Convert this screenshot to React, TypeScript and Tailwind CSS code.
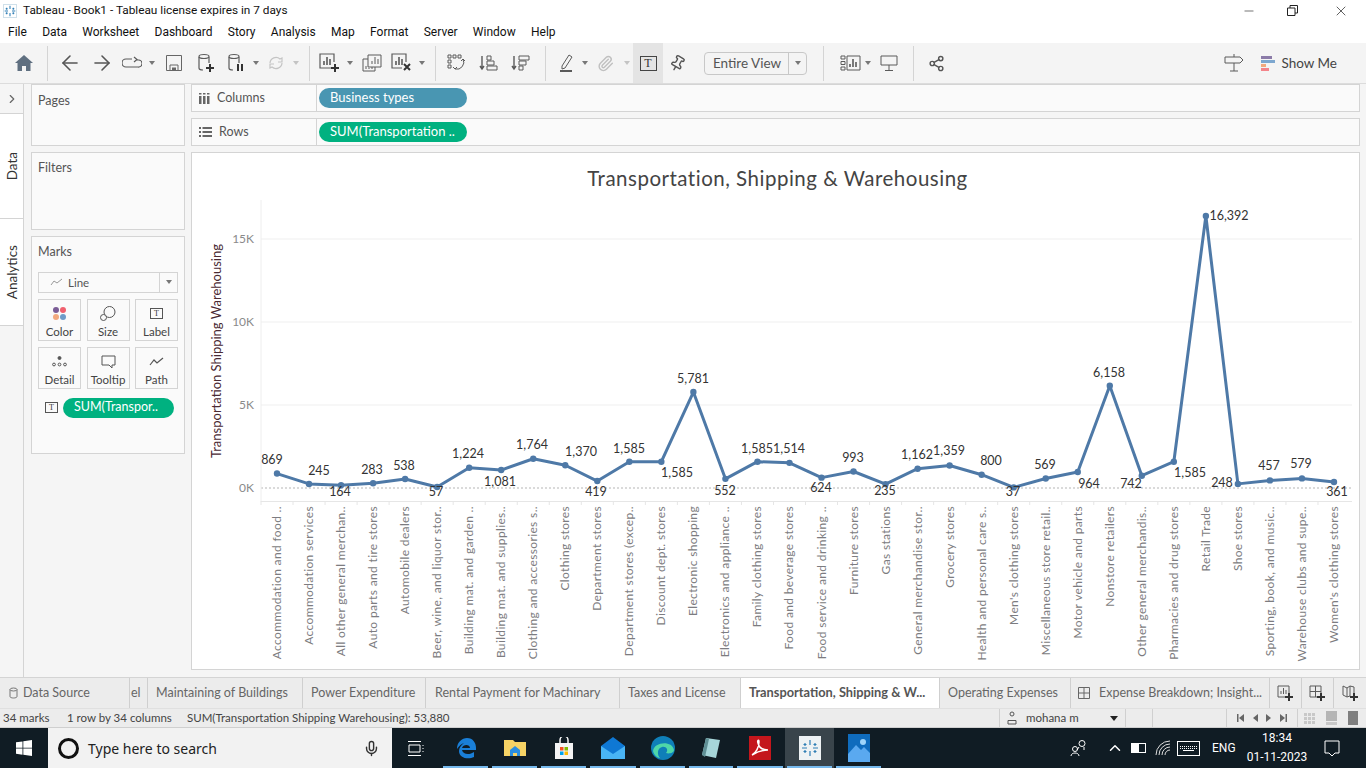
import type { ReactNode } from 'react';
import { ArrowLeft, ArrowRight, Minus, X, ChevronRight, Mic, ChevronUp, Paperclip, Pin, Share2 } from 'lucide-react';

const values = [869, 245, 164, 283, 538, 57, 1224, 1081, 1764, 1370, 419, 1585, 1585, 5781, 552, 1585, 1514, 624, 993, 235, 1162, 1359, 800, 37, 569, 964, 6158, 742, 1585, 16392, 248, 457, 579, 361];

const names = [
  'Accommodation and food ..', 'Accommodation services', 'All other general merchan..', 'Auto parts and tire stores',
  'Automobile dealers', 'Beer, wine, and liquor stor..', 'Building mat. and garden ..', 'Building mat. and supplies..',
  'Clothing and accessories s..', 'Clothing stores', 'Department stores', 'Department stores (excep..',
  'Discount dept. stores', 'Electronic shopping', 'Electronics and appliance ..', 'Family clothing stores',
  'Food and beverage stores', 'Food service and drinking ..', 'Furniture stores', 'Gas stations',
  'General merchandise stor..', 'Grocery stores', 'Health and personal care s..', "Men's clothing stores",
  'Miscellaneous store retail..', 'Motor vehicle and parts', 'Nonstore retailers', 'Other general merchandis..',
  'Pharmacies and drug stores', 'Retail Trade', 'Shoe stores', 'Sporting, book, and music..',
  'Warehouse clubs and supe..', "Women's clothing stores",
];

// label centre positions, read off the screenshot
const labelPos: [number, number][] = [
  [272, 464], [319, 475], [340, 496], [372, 474], [404, 470], [436, 496], [468, 458], [500, 486], [532, 449], [581, 456],
  [596, 496], [629, 453], [677, 477], [693, 383], [725, 495], [757, 453], [789, 453], [821, 492], [853, 462], [885, 495],
  [917, 459], [949, 455], [991, 465], [1013, 496], [1045, 469], [1089, 488], [1109, 377], [1131, 488], [1190, 477], [1229, 220],
  [1222, 487], [1269, 470], [1301, 468], [1337, 496],
];

const px = (i: number) => 277 + i * 32.03;
const py = (v: number) => 488 - (v / 5000) * 83;

function Chart() {
  const points = values.map((v, i) => `${px(i)},${py(v)}`).join(' ');
  return (
    <svg viewBox="192 153 1167 516" className="w-full h-full block" style={{ fontFamily: 'Lato, sans-serif' }}>
      <text x="777.500" y="186" textAnchor="middle" fontSize="20.5" fill="#444" letterSpacing="0.5">Transportation, Shipping &amp; Warehousing</text>
      <text transform="translate(221,458) rotate(-90)" fontSize="13" fill="#4a2a33">Transportation Shipping Warehousing</text>
      {[15, 10, 5].map((k) => (
        <g key={k}>
          <line x1="261" x2="1352" y1={488 - k * 16.6} y2={488 - k * 16.6} stroke="#efefef" />
          <text x="254" y={488 - k * 16.6 + 4} textAnchor="end" fontSize="12" fill="#8a8a8a">{k}K</text>
        </g>
      ))}
      <text x="254" y="492" textAnchor="end" fontSize="12" fill="#8a8a8a">0K</text>
      <line x1="261" x2="1352" y1="488" y2="488" stroke="#b5b5b5" strokeDasharray="2 2" />
      <line x1="261" x2="261" y1="200" y2="502" stroke="#eeeeee" />
      <line x1="261" x2="1352" y1="501.500" y2="501.500" stroke="#e6e6e6" />
      {values.map((_, i) => (
        <line key={i} x1={261 + i * 32.03} x2={261 + i * 32.03} y1="501" y2="505" stroke="#e6e6e6" />
      ))}
      <polyline points={points} fill="none" stroke="#4e79a7" strokeWidth="3" strokeLinejoin="round" />
      {values.map((v, i) => (
        <circle key={i} cx={px(i)} cy={py(v)} r="3.2" fill="#4e79a7" />
      ))}
      {values.map((v, i) => (
        <text key={i} x={labelPos[i][0]} y={labelPos[i][1]} textAnchor="middle" fontSize="12.5" fill="#333">
          {v.toLocaleString('en-US')}
        </text>
      ))}
      {names.map((n, i) => (
        <text key={n} transform={`translate(${px(i) + 4},506) rotate(-90)`} textAnchor="end" fontSize="12" letterSpacing="0.35" fill="#7c7c80">
          {n}
        </text>
      ))}
    </svg>
  );
}

function Ico({ children, w = 22, h = 22 }: { children: ReactNode; w?: number; h?: number }) {
  return (
    <svg width={w} height={h} viewBox={`0 0 ${w} ${h}`} fill="none" stroke="#5a5a5a" strokeWidth="1.2">
      {children}
    </svg>
  );
}

function Caret() {
  return <div className="w-0 h-0 border-x-[3px] border-x-transparent border-t-[4px] border-t-[#777]" />;
}

function Sep({ className }: { className: string }) {
  return (
    <div className={`${className} flex justify-center`}>
      <div className="w-px h-[35px] bg-[#d4d4d4]" />
    </div>
  );
}

function Slot({ className, children }: { className: string; children?: ReactNode }) {
  return <div className={`${className} h-full flex items-center justify-center shrink-0`}>{children}</div>;
}

function Plus({ x, y }: { x: number; y: number }) {
  return <path d={`M${x - 4} ${y}h8M${x} ${y - 4}v8`} stroke="#333" strokeWidth="2" />;
}

function Toolbar() {
  return (
    <div className="h-[41px] bg-[#f4f4f4] border-b border-[#dcdcdc] flex items-center pl-2 shrink-0">
      <Slot className="w-8">
        <svg width="18" height="16" viewBox="0 0 18 16" fill="#5f6f80"><path d="M9 0l9 8h-2.500v8h-4.500v-5H7v5H2.500V8H0z" /></svg>
      </Slot>
      <Sep className="w-[14px]" />
      <Slot className="w-8"><ArrowLeft size={24} stroke="#555" strokeWidth={1.6} /></Slot>
      <Slot className="w-8"><ArrowRight size={24} stroke="#555" strokeWidth={1.6} /></Slot>
      <Slot className="w-7">
        <Ico w={20} h={14}><path d="M10 3H4a3.500 3.500 0 0 0 0 8h12a3.500 3.500 0 0 0 1-7h-3M12 1l3 2.500-3 2.500" /></Ico>
      </Slot>
      <Slot className="w-3"><Caret /></Slot>
      <Slot className="w-8">
        <Ico w={16} h={16}><path d="M.500.500h15v15H.500zM4 15v-5h8v5" stroke="#666" strokeWidth="1" /><path d="M6 12.500h4V15H6z" fill="#666" stroke="none" /></Ico>
      </Slot>
      <Slot className="w-8">
        <Ico w={20} h={20}><ellipse cx="8" cy="3.500" rx="5" ry="2" /><path d="M3 4v11c0 1 1 2 4 2M13 4v6" /><Plus x={14} y={15} /></Ico>
      </Slot>
      <Slot className="w-7">
        <Ico w={20} h={20}><ellipse cx="8" cy="3.500" rx="5" ry="2" /><path d="M3 4v11c0 1 1 2 4 2M13 4v6" /><path d="M12 11v7M16 11v7" stroke="#333" strokeWidth="2" /></Ico>
      </Slot>
      <Slot className="w-3"><Caret /></Slot>
      <Slot className="w-7">
        <Ico w={18} h={18}><path d="M3 9a6 6 0 0 1 10-4l2-1v4h-4M15 9a6 6 0 0 1-10 4l-2 1v-4h4" stroke="#c4c4c4" /></Ico>
      </Slot>
      <Slot className="w-3"><div className="w-0 h-0 border-x-[3px] border-x-transparent border-t-[4px] border-t-[#c4c4c4]" /></Slot>
      <Sep className="w-[14px]" />
      <Slot className="w-7">
        <Ico w={22} h={20}><path d="M15 15H1V1h14v8" /><path d="M5 12V8M8 12V4M11 12V6" strokeWidth="1.600" /><Plus x={16} y={15} /></Ico>
      </Slot>
      <Slot className="w-3"><Caret /></Slot>
      <Slot className="w-8">
        <Ico w={20} h={18}><path d="M6 1h13v12H6zM6 5H1v12h12v-4" strokeWidth="1" /><path d="M10 10V7M13 10V3M16 10V5M4 15v-3M7 15v-1M10 15v-2" strokeWidth="1" /></Ico>
      </Slot>
      <Slot className="w-7">
        <Ico w={22} h={20}><path d="M11 15H1V1h14v8" /><path d="M5 12V8M8 12V4M11 12V6" strokeWidth="1.600" /><path d="M13 11l6 6M19 11l-6 6" stroke="#333" strokeWidth="2" /></Ico>
      </Slot>
      <Slot className="w-3"><Caret /></Slot>
      <Sep className="w-[14px]" />
      <Slot className="w-[30px]">
        <Ico w={20} h={18}><path d="M1 1h3v3H1zM6 1h3v3H6zM11 1h3v3h-3zM1 6h3v3H1zM1 11h3v3H1z" strokeWidth="1" /><path d="M16 5a7 7 0 0 1-8 10M6 13l2 2 2-2M14 7l2-2 2 2" strokeWidth="1" /></Ico>
      </Slot>
      <Slot className="w-[34px]">
        <Ico w={20} h={18}><path d="M3 2v13M1 12l2 3 2-3" strokeWidth="1.400" /><path d="M8 2h4v4H8zM8 7h7v4H8zM8 12h10v4H8z" strokeWidth="1" /></Ico>
      </Slot>
      <Slot className="w-[30px]">
        <Ico w={20} h={18}><path d="M3 2v13M1 12l2 3 2-3" strokeWidth="1.400" /><path d="M8 2h10v4H8zM8 7h7v4H8zM8 12h4v4H8z" strokeWidth="1" /></Ico>
      </Slot>
      <Sep className="w-[18px]" />
      <Slot className="w-[26px]">
        <Ico w={16} h={20}><path d="M3 13L10 2l3 2-7 11-3 1z" strokeWidth="1" /><path d="M1 18h12" strokeWidth="2" /></Ico>
      </Slot>
      <Slot className="w-[10px]"><Caret /></Slot>
      <Slot className="w-[30px]"><Paperclip size={17} stroke="#c0c0c0" /></Slot>
      <Slot className="w-[13px]"><div className="w-0 h-0 border-x-[3px] border-x-transparent border-t-[4px] border-t-[#c4c4c4]" /></Slot>
      <Slot className="w-[30px] bg-[#e4e4e4]">
        <div className="w-[17px] h-[15px] border border-[#444] flex items-center justify-center text-[12px] text-[#333] font-['Liberation_Serif',serif] leading-none">T</div>
      </Slot>
      <Slot className="w-[29px]"><Pin size={17} stroke="#555" className="rotate-[30deg]" /></Slot>
      <div className="ml-3 w-[103px] h-[23px] border border-[#c8c8c8] rounded-sm flex items-center shrink-0">
        <span className="flex-1 pl-2 text-[13.500px] text-[#555] font-['Lato',sans-serif]">Entire View</span>
        <div className="w-[18px] h-full border-l border-[#c8c8c8] flex items-center justify-center"><Caret /></div>
      </div>
      <Sep className="w-[32px]" />
      <Slot className="w-6">
        <Ico w={22} h={16}><path d="M1 1h4v3H1zM1 6.500h4v3H1zM1 12h4v3H1zM7 1h13v14H7z" strokeWidth="1" /><path d="M10 12V9M13 12V4M16 12V7" strokeWidth="1.600" /></Ico>
      </Slot>
      <Slot className="w-[10px]"><Caret /></Slot>
      <Slot className="w-8">
        <Ico w={18} h={18}><path d="M1 2h16v9H1zM9 11v5M5 16.500h8" strokeWidth="1" /></Ico>
      </Slot>
      <Sep className="w-4" />
      <Slot className="w-[30px]"><Share2 size={17} stroke="#555" /></Slot>
      <div className="flex-1" />
      <Slot className="w-[30px]">
        <Ico w={20} h={20}><path d="M1 4h15l3 3-3 3H1zM10 1v3M10 10v8M6 18h8" strokeWidth="1" /></Ico>
      </Slot>
      <div className="ml-3 flex flex-col gap-px w-[14px] shrink-0">
        <div className="h-[3px] w-[11px] bg-[#8b7ba8]" />
        <div className="h-[3px] w-[14px] bg-[#7da7cf]" />
        <div className="h-[3px] w-[5px] bg-[#f2a97e]" />
        <div className="h-[3px] w-[8px] bg-[#f4848a]" />
      </div>
      <span className="ml-[6px] mr-[29px] text-[13.500px] text-[#444] font-['Lato',sans-serif]">Show Me</span>
    </div>
  );
}

function MarkCard({ label, icon }: { label: string; icon: ReactNode }) {
  return (
    <div className="h-[42px] border border-[#d4d4d4] flex flex-col items-center pt-[3px] text-[11.500px] text-[#444]">
      <div className="h-[22px] flex items-center">{icon}</div>
      <span className="leading-[14px]">{label}</span>
    </div>
  );
}

function TBox() {
  return <div className="w-[13px] h-[11px] border border-[#555] flex items-center justify-center text-[8px] leading-none text-[#333] font-['Liberation_Serif',serif]">T</div>;
}

function Sidebar() {
  return (
    <div className="w-[154px] ml-[7px] mr-[6px] shrink-0 flex flex-col gap-[6px] text-[#555] text-[12.500px] font-['Lato',sans-serif]">
      <div className="h-[62px] border border-[#d4d4d4] pl-[6px] pt-[7px] bg-[#fafafa]">Pages</div>
      <div className="h-[78px] border border-[#d4d4d4] pl-[6px] pt-[6px] bg-[#fafafa]">Filters</div>
      <div className="h-[218px] border border-[#d4d4d4] px-[6px] pt-[6px] bg-[#fafafa]">
        <div>Marks</div>
        <div className="mt-[10px] h-[21px] border border-[#d4d4d4] flex items-center">
          <div className="flex-1 flex items-center pl-[11px] gap-[5px] text-[11.500px]">
            <svg width="13" height="8" viewBox="0 0 13 8" fill="none" stroke="#999"><path d="M1 7l3-4 3 2 5-4" /></svg>
            Line
          </div>
          <div className="w-[18px] h-full border-l border-[#d4d4d4] flex items-center justify-center"><Caret /></div>
        </div>
        <div className="mt-[6px] grid grid-cols-[43px_43px_43px] justify-between gap-y-[6px]">
          <MarkCard label="Color" icon={<div className="grid grid-cols-2 gap-[1px]"><i className="block w-[6px] h-[6px] rounded-full bg-[#7a5c96]" /><i className="block w-[6px] h-[6px] rounded-full bg-[#f0606e]" /><i className="block w-[6px] h-[6px] rounded-full bg-[#f2a97e]" /><i className="block w-[6px] h-[6px] rounded-full bg-[#6f9bc8]" /></div>} />
          <MarkCard label="Size" icon={<svg width="16" height="15" viewBox="0 0 16 15" fill="none" stroke="#555"><circle cx="9.500" cy="6" r="5.500" /><circle cx="3.500" cy="11.500" r="3" fill="#fafafa" /></svg>} />
          <MarkCard label="Label" icon={<TBox />} />
          <MarkCard label="Detail" icon={<svg width="15" height="11" viewBox="0 0 15 11" fill="none" stroke="#555"><circle cx="7.500" cy="2" r="1.500" fill="#555" /><circle cx="2" cy="8.500" r="1.400" /><circle cx="7.500" cy="8.500" r="1.400" /><circle cx="13" cy="8.500" r="1.400" /></svg>} />
          <MarkCard label="Tooltip" icon={<svg width="15" height="14" viewBox="0 0 15 14" fill="none" stroke="#555"><path d="M1 1h13v9h-3v3l-3-3H1z" /></svg>} />
          <MarkCard label="Path" icon={<svg width="15" height="9" viewBox="0 0 15 9" fill="none" stroke="#555" strokeWidth="1.200"><path d="M1 8l4-5 3 3 6-5" /></svg>} />
        </div>
        <div className="mt-[9px] flex items-center gap-[5px] pl-[7px]">
          <TBox />
          <div className="w-[111px] h-[20px] rounded-full bg-[#00b180] text-white text-[12.500px] flex items-center pl-[11px]">SUM(Transpor..</div>
        </div>
      </div>
    </div>
  );
}

function Shelf({ icon, label, pill, color }: { icon: ReactNode; label: string; pill: string; color: string }) {
  return (
    <div className="h-[28px] border border-[#d4d4d4] bg-[#fafafa] flex items-center shrink-0">
      <div className="w-[125px] h-full flex items-center border-r border-[#d4d4d4] pl-[7px] gap-[7px] text-[12.500px] text-[#555]">
        {icon}
        {label}
      </div>
      <div className={`${color} ml-[2px] w-[148px] h-[20px] rounded-full text-white text-[13px] flex items-center pl-[11px]`}>{pill}</div>
    </div>
  );
}

function Tab({ className, children }: { className: string; children: ReactNode }) {
  return <div className={`${className} h-full shrink-0 flex items-center border-r border-[#cfcfcf] text-[#666] text-[12.500px] whitespace-nowrap overflow-hidden`}>{children}</div>;
}

function Tabs() {
  return (
    <div className="h-[31px] bg-[#ececec] border-t border-[#d4d4d4] flex font-['Lato',sans-serif] shrink-0">
      <Tab className="w-[130px] pl-[9px] gap-[5px]">
        <svg width="9" height="12" viewBox="0 0 9 12" fill="none" stroke="#777"><ellipse cx="4.500" cy="2.500" rx="3.500" ry="1.500" /><path d="M1 2.500v7c0 2 7 2 7 0v-7" /></svg>
        Data Source
      </Tab>
      <Tab className="w-[18px] pl-px">el</Tab>
      <Tab className="w-[155px] pl-2">Maintaining of Buildings</Tab>
      <Tab className="w-[123px] pl-2">Power Expenditure</Tab>
      <Tab className="w-[194px] pl-[9px]">Rental Payment for Machinary</Tab>
      <Tab className="w-[121px] pl-2">Taxes and License</Tab>
      <Tab className="w-[199px] pl-2 bg-white font-bold !text-[#555] !text-[12.800px]">Transportation, Shipping &amp; W...</Tab>
      <Tab className="w-[131px] pl-2">Operating Expenses</Tab>
      <Tab className="w-[199px] justify-center gap-[9px]">
        <svg width="12" height="12" viewBox="0 0 12 12" fill="none" stroke="#666"><path d="M.5.5h11v11H.5zM6 .5v11M.5 6h11" /></svg>
        Expense Breakdown; Insight...
      </Tab>
      <Tab className="w-[32px] justify-center"><Ico w={17} h={17}><path d="M10 12H1V1h11v7M4 9V6M6.500 9V3M9 9V5" strokeWidth="1" /><Plus x={12} y={12} /></Ico></Tab>
      <Tab className="w-[32px] justify-center"><Ico w={17} h={17}><path d="M9 12H1V1h11v7M6.500 1v11M1 6.500h11" strokeWidth="1" /><Plus x={12} y={12} /></Ico></Tab>
      <div className="flex-1 flex items-center justify-center"><Ico w={17} h={17}><path d="M8 11l-3 1-4-2V1l4 2 3-2 4 1v6M5 3v9M8 1v10" strokeWidth="1" /><Plus x={12} y={12} /></Ico></div>
    </div>
  );
}

function StatusBar() {
  return (
    <div className="h-[20px] bg-[#ececec] border-t border-[#e0e0e0] border-b border-b-[#cfcfcf] flex items-center text-[11.500px] text-[#444] font-['Lato',sans-serif] shrink-0">
      <span className="w-[64px] pl-[3px]">34 marks</span>
      <span className="w-[120px] pl-[3px]">1 row by 34 columns</span>
      <span className="pl-[3px]">SUM(Transportation Shipping Warehousing): 53,880</span>
      <div className="flex-1" />
      <div className="w-[127px] h-full border-x border-[#d0d0d0] flex items-center pl-[7px] gap-[9px]">
        <svg width="10" height="14" viewBox="0 0 10 14" fill="none" stroke="#555"><circle cx="5" cy="3" r="2" /><path d="M1 13V9.500h8V13z" /></svg>
        <span className="flex-1">mohana m</span>
        <div className="mr-[7px] w-0 h-0 border-x-[4px] border-x-transparent border-t-[5px] border-t-[#222]" />
      </div>
      <div className="w-[27px] h-full border-r border-[#d0d0d0]" />
      <div className="w-[74px] h-full border-r border-[#d0d0d0]" />
      <div className="w-[71px] h-full border-r border-[#d0d0d0] flex items-center justify-around px-[6px]">
        <svg width="7" height="8" viewBox="0 0 7 8" fill="#666"><path d="M0 0h1.500v8H0zM7 0v8L2 4z" /></svg>
        <svg width="5" height="8" viewBox="0 0 5 8" fill="#666"><path d="M5 0v8L0 4z" /></svg>
        <svg width="5" height="8" viewBox="0 0 5 8" fill="#666"><path d="M0 0v8l5-4z" /></svg>
        <svg width="7" height="8" viewBox="0 0 7 8" fill="#666"><path d="M0 0v8l5-4zM5.500 0H7v8H5.500z" /></svg>
      </div>
      <div className="flex-1 max-w-[68px] flex items-center justify-around pr-[2px]">
        <div className="grid grid-cols-3 gap-px">{Array.from({ length: 9 }, (_, i) => <i key={i} className="block w-[3px] h-[3px] bg-[#c8c8c8]" />)}</div>
        <div className="w-[11px] h-[14px] flex flex-col gap-px"><i className="block h-[10px] bg-[#b5b5b5]" /><i className="block h-[3px] bg-[#c8c8c8]" /></div>
        <div className="w-[10px] h-[14px] bg-[#7f7f7f]" />
      </div>
    </div>
  );
}

function TaskIcon({ className, active, children }: { className: string; active?: boolean; children: ReactNode }) {
  return (
    <div className={`${className} h-full shrink-0 relative flex items-center justify-center ${active ? 'bg-[#39444b]' : ''}`}>
      {children}
      <div className="absolute bottom-0 left-[2px] right-[2px] h-[2px] bg-[#76b9ed]" />
    </div>
  );
}

function Taskbar() {
  return (
    <div className="h-[40px] bg-[#101c24] flex items-center text-white font-['Roboto',sans-serif] shrink-0">
      <div className="w-[48px] h-full flex items-center justify-center">
        <svg width="16" height="16" viewBox="0 0 16 16" fill="#fff"><path d="M0 2.300l6.500-.9v6.300H0zM7.300 1.300L16 0v7.700H7.300zM0 8.400h6.500v6.300L0 13.800zM7.300 8.400H16V16l-8.700-1.200z" /></svg>
      </div>
      <div className="w-[344px] h-full bg-[#f2f2f2] flex items-center pl-[10px] text-[#222] text-[15px] font-['Noto_Sans',sans-serif]">
        <div className="w-[21px] h-[21px] rounded-full border-[3px] border-[#111] mr-[9px]" />
        <span className="flex-1 text-[14px]">Type here to search</span>
        <Mic size={17} stroke="#333" className="mr-[12px]" />
      </div>
      <div className="w-[48px] flex justify-center">
        <svg width="16" height="17" viewBox="0 0 16 17" fill="none" stroke="#fff"><path d="M0 1.500h13M0 15.500h13M1 5h11v7H1zM15 5v1M15 8v1M15 11v1" /></svg>
      </div>
      <div className="w-px" />
      <TaskIcon className="w-[49px]"><svg width="22" height="22" viewBox="0 0 22 22"><path d="M2 12C2 5 7 1 12 1c6 0 9 5 9 10v2H7c1 5 8 5 12 2v5c-6 3-15 1-15-6 0-3 2-6 5-8-3 1-5 3-7 6zm5-1h8c0-4-7-4-8 0z" fill="#1a7fd8" /></svg></TaskIcon>
      <TaskIcon className="w-[49px]"><svg width="22" height="20" viewBox="0 0 22 20"><path d="M0 2h9l2 2h11v14H0z" fill="#f6d365" /><path d="M6 12l5-4 5 4v6H6z" fill="#2a8ee0" /><path d="M9 15h4v3H9z" fill="#f6d365" /></svg></TaskIcon>
      <TaskIcon className="w-[49px]"><svg width="20" height="22" viewBox="0 0 20 22"><path d="M1 6h18v16H1z" fill="#f4f4f4" /><path d="M6 6V3a4 4 0 0 1 8 0v3" fill="none" stroke="#f4f4f4" strokeWidth="1.500" /><path d="M6 10h3.500v3.500H6z" fill="#f25022" /><path d="M10.500 10H14v3.500h-3.500z" fill="#7fba00" /><path d="M6 14.500h3.500V18H6z" fill="#00a4ef" /><path d="M10.500 14.500H14V18h-3.500z" fill="#ffb900" /></svg></TaskIcon>
      <TaskIcon className="w-[50px]"><svg width="24" height="22" viewBox="0 0 24 22"><path d="M12 0L0 9v13h24V9z" fill="#0f78d4" /><path d="M0 9l12 8 12-8v13H0z" fill="#49b4f5" /></svg></TaskIcon>
      <TaskIcon className="w-[49px]"><svg width="24" height="24" viewBox="0 0 24 24"><circle cx="12" cy="12" r="12" fill="#0f7fb8" /><path d="M2 15C3 6 21 4 23 14c0 3-5 4-8 3 3-3 0-7-4-6-5 1-5 8-2 11-3 0-6-3-7-7z" fill="#4fd7a8" /></svg></TaskIcon>
      <TaskIcon className="w-[48px]"><svg width="22" height="24" viewBox="0 0 22 24"><path d="M6 2l14 2-4 18-14-3z" fill="#a6d5d9" /><path d="M6 2l-4 17 3 2 4-18z" fill="#5f8f95" /></svg></TaskIcon>
      <TaskIcon className="w-[50px]"><svg width="22" height="24" viewBox="0 0 22 24"><path d="M0 0h22v24H0z" fill="#c4161c" /><path d="M3 19c4-2 7-8 7-13 0-3-2-2-1 1 1 5 4 7 10 7-5 0-11 2-16 5z" fill="none" stroke="#fff" strokeWidth="1.500" /></svg></TaskIcon>
      <TaskIcon className="w-[49px]" active>
        <div className="w-[22px] h-[24px] bg-[#eef2f4] flex items-center justify-center">
          <svg width="18" height="18" viewBox="0 0 18 18" stroke="#2f7eb5" strokeWidth="1.200"><path d="M9 1v5M9 12v5M1 9h5M12 9h5M4 4v3M2.500 5.500h3M14 4v3M12.500 5.500h3M4 11v3M2.500 12.500h3M14 11v3M12.500 12.500h3" /></svg>
        </div>
      </TaskIcon>
      <TaskIcon className="w-[49px]"><svg width="22" height="28" viewBox="0 0 22 28"><path d="M0 0h22v28H0z" fill="#0f6cbd" /><path d="M0 20l8-9 5 5 3-3 6 6v9H0z" fill="#5aa9f0" /><circle cx="15" cy="8" r="3" fill="#9fd5fa" /></svg></TaskIcon>
      <div className="flex-1" />
      <div className="w-[22px] flex justify-center mr-[16px]">
        <svg width="18" height="18" viewBox="0 0 18 18" fill="none" stroke="#fff"><circle cx="12" cy="4.500" r="3" /><path d="M9 8l-2 3M14 8v3" /><circle cx="5" cy="10" r="2.500" /><path d="M1 17c0-4 8-4 8 0" /></svg>
      </div>
      <ChevronUp size={18} stroke="#fff" className="mr-[7px]" />
      <div className="w-[15px] h-[10px] border border-white mr-[9px] flex"><i className="block w-[7px] bg-white" /></div>
      <svg width="16" height="16" viewBox="0 0 16 16" fill="none" stroke="#ddd" className="mr-[6px]"><path d="M1 15A14 14 0 0 1 15 1M4 15A11 11 0 0 1 15 4M7 15a8 8 0 0 1 8-8M10 15a5 5 0 0 1 5-5" /></svg>
      <div className="w-[23px] h-[15px] border border-white mr-[12px] flex flex-col justify-center gap-px px-[2px]">
        <i className="block h-px border-t border-dotted border-white" />
        <i className="block h-px border-t border-dotted border-white" />
        <i className="block h-px bg-white mx-[3px]" />
      </div>
      <span className="w-[29px] text-[12px] mr-[5px]">ENG</span>
      <div className="w-[62px] text-center text-[12px] leading-[19px] whitespace-nowrap">
        <div>18:34</div>
        <div>01-11-2023</div>
      </div>
      <div className="w-[48px] flex justify-center">
        <svg width="16" height="17" viewBox="0 0 16 17" fill="none" stroke="#fff"><path d="M1 1h14v12h-4l-3 3-3-3H1z" /></svg>
      </div>
      <div className="w-[10px]" />
    </div>
  );
}

export default function App() {
  return (
    <div className="w-[1366px] h-[768px] flex flex-col overflow-hidden bg-white font-['Roboto',sans-serif]">
      {/* Title bar */}
      <div className="h-[21px] flex items-center pl-[3px] shrink-0 text-[11.800px] text-[#111]">
        <div className="w-[14px] h-[14px] border border-[#cfe0ea] flex items-center justify-center">
          <svg width="12" height="12" viewBox="0 0 18 18" stroke="#2f7eb5" strokeWidth="1.600"><path d="M9 1v5M9 12v5M1 9h5M12 9h5M4 4v3M2.500 5.500h3M14 4v3M12.500 5.500h3M4 11v3M2.500 12.500h3M14 11v3M12.500 12.500h3" /></svg>
        </div>
        <span className="ml-[6px] flex-1">Tableau - Book1 - Tableau license expires in 7 days</span>
        <Minus size={14} strokeWidth={1} className="mr-[31px]" />
        <svg width="11" height="11" viewBox="0 0 11 11" fill="none" stroke="#222" className="mr-[35px]"><path d="M.5 3h7.500v7.500H.5zM3 3V.5h7.500V8H8" /></svg>
        <X size={16} strokeWidth={1} className="mr-[17px]" />
      </div>
      {/* Menu bar */}
      <div className="h-[22px] flex items-center pl-2 gap-[15.300px] text-[12px] text-[#111] shrink-0">
        {['File', 'Data', 'Worksheet', 'Dashboard', 'Story', 'Analysis', 'Map', 'Format', 'Server', 'Window', 'Help'].map((m) => (
          <span key={m}>{m}</span>
        ))}
      </div>
      <Toolbar />
      {/* Workspace */}
      <div className="flex-1 min-h-0 flex bg-[#f5f5f5] font-['Lato',sans-serif]">
        <div className="w-[24px] border-r border-[#d4d4d4] shrink-0 flex flex-col text-[13.500px] text-[#333]">
          <div className="h-[30px] border-b border-[#d4d4d4] flex items-center justify-center"><ChevronRight size={14} stroke="#666" /></div>
          <div className="h-[105px] border-b border-[#d4d4d4] bg-white flex items-center justify-center pl-[2px]"><span className="-rotate-90 whitespace-nowrap">Data</span></div>
          <div className="h-[107px] border-b border-[#d4d4d4] bg-white flex items-center justify-center pl-[2px]"><span className="-rotate-90 whitespace-nowrap">Analytics</span></div>
        </div>
        <Sidebar />
        <div className="flex-1 min-w-0 mr-[6px] flex flex-col gap-[6px]">
          <Shelf
            label="Columns"
            color="bg-[#4996b2]"
            pill="Business types"
            icon={<svg width="11" height="11" viewBox="0 0 11 11" fill="#666"><path d="M0 3h2.500v8H0zM4 3h2.500v8H4zM8 3h2.500v8H8zM0 0h2.500v1.500H0zM4 0h2.500v1.500H4zM8 0h2.500v1.500H8z" /></svg>}
          />
          <Shelf
            label="Rows"
            color="bg-[#00b180]"
            pill="SUM(Transportation .."
            icon={<svg width="13" height="10" viewBox="0 0 13 10" fill="#666"><path d="M0 0h2v2H0zM3.500 0H13v2H3.500zM0 4h2v2H0zM3.500 4H13v2H3.500zM0 8h2v2H0zM3.500 8H13v2H3.500z" /></svg>}
          />
          <div className="h-[518px] border border-[#d4d4d4] bg-white shrink-0 overflow-hidden">
            <Chart />
          </div>
        </div>
      </div>
      <Tabs />
      <StatusBar />
      <Taskbar />
    </div>
  );
}
